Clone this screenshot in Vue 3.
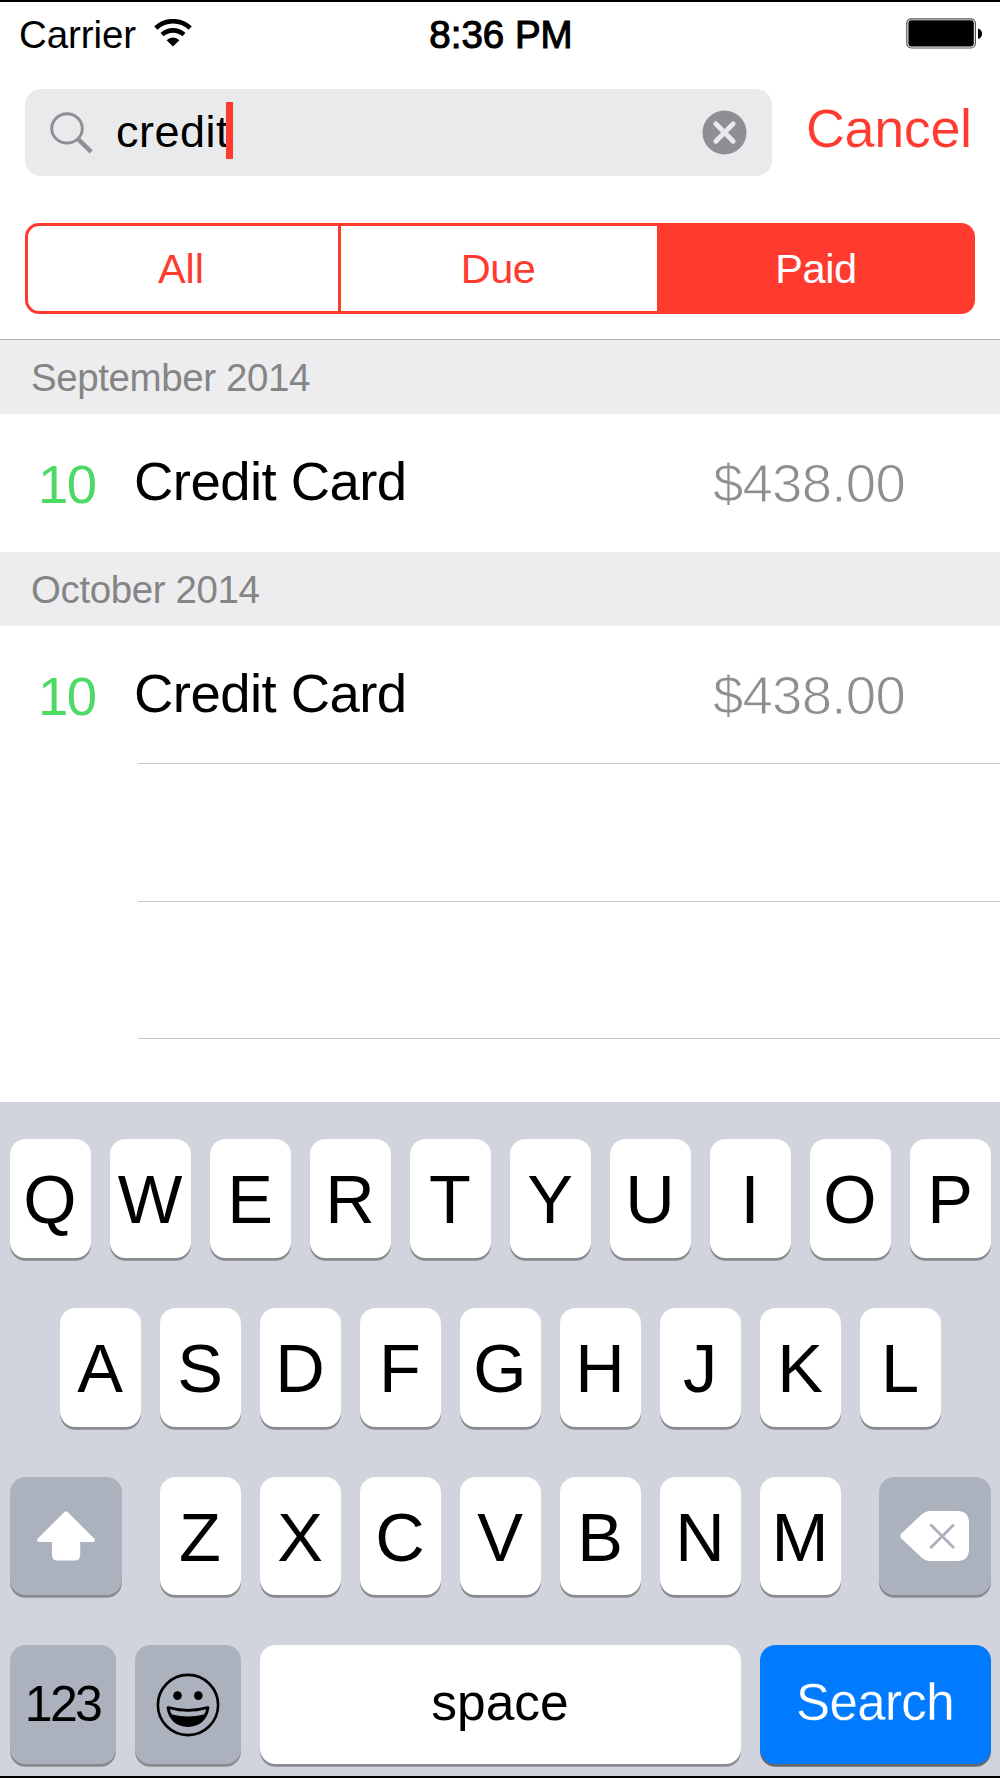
<template>
  <div class="screen">
    <header class="nav">
      <div class="status-bar">
        <div class="status-left">
          <span class="carrier">Carrier</span>
          <svg class="wifi" viewBox="0 0 38 28" aria-hidden="true">
            <path d="M1.8 9 A25.1 25.1 0 0 1 36.2 9" />
            <path d="M8.1 15.6 A16.1 16.1 0 0 1 29.9 15.6" />
            <path class="wifi-dot" d="M19 27.6 L12.6 21.2 A9.2 9.2 0 0 1 25.4 21.2 Z" />
          </svg>
        </div>
        <span class="clock">8:36 PM</span>
        <div class="status-right">
          <svg class="battery" viewBox="0 0 77 31" aria-hidden="true">
            <rect class="battery-shell" x="0.8" y="0.8" width="68.6" height="29.2" rx="4.5" />
            <rect x="2.4" y="2.2" width="65.4" height="26.4" rx="3" />
            <path d="M72 10.4 C77.4 11.4 77.4 20 72 21 Z" />
          </svg>
        </div>
      </div>

      <div class="search-row">
        <div class="search-field">
          <svg class="glass" viewBox="0 0 44 42" aria-hidden="true">
            <ellipse cx="17" cy="16.4" rx="15.3" ry="14.6" />
            <path class="glass-handle" d="M27.4 26.4 L41.2 39.8" />
          </svg>
          <span class="query">{{ query }}</span>
          <span class="caret"></span>
          <svg class="clear" viewBox="0 0 45 45" role="button" aria-label="Clear text">
            <circle cx="22.5" cy="22.5" r="22" />
            <path d="M13.8 13.8 L31.2 31.2 M31.2 13.8 L13.8 31.2" />
          </svg>
        </div>
        <button class="cancel" type="button">Cancel</button>
      </div>

      <div class="segments" role="tablist">
        <button
          v-for="name in FILTERS"
          :key="name"
          type="button"
          role="tab"
          class="segment"
          :class="['segment--' + name.toLowerCase(), { 'segment--on': name === filter }]"
          :aria-selected="name === filter"
          @click="filter = name"
        >
          {{ name }}
        </button>
      </div>
    </header>

    <main class="bills">
      <section v-for="group in GROUPS" :key="group.month">
        <h2 class="month">{{ group.month }}</h2>
        <div v-for="bill in group.bills" :key="bill.name" class="bill">
          <span class="day">{{ bill.day }}</span>
          <span class="name">{{ bill.name }}</span>
          <span class="amount">{{ bill.amount }}</span>
        </div>
      </section>
      <div class="blank"></div>
      <div class="blank"></div>
      <div class="blank"></div>
    </main>

    <footer class="keyboard">
      <div class="keys">
        <button v-for="k in ROW_1" :key="k" type="button" class="key">{{ k }}</button>
      </div>
      <div class="keys">
        <button v-for="k in ROW_2" :key="k" type="button" class="key">{{ k }}</button>
      </div>
      <div class="keys keys--spread">
        <button type="button" class="key key--dark key--shift" aria-label="Shift">
          <svg class="shift-icon" viewBox="0 0 58 50" aria-hidden="true">
            <path d="M27.4 1 Q29 -0.4 30.6 1 L57.2 27.6 Q59 30.8 55.8 31 L43.2 31 L43.2 44 Q43.2 49.6 37.6 49.6 L20.6 49.6 Q15 49.6 15 44 L15 31 L2.2 31 Q-1 30.8 0.8 27.6 Z" />
          </svg>
        </button>
        <div class="letters">
          <button v-for="k in ROW_3" :key="k" type="button" class="key">{{ k }}</button>
        </div>
        <button type="button" class="key key--dark key--shift" aria-label="Delete">
          <svg class="delete-icon" viewBox="0 0 70 50" aria-hidden="true">
            <path d="M1.4 22.6 L20.4 4.6 Q25.4 0 30 0 L57 0 Q69 0 69 12 L69 38 Q69 50 57 50 L30 50 Q25.4 50 20.4 45.4 L1.4 27.4 Q-0.8 25 1.4 22.6 Z" />
            <path class="delete-x" d="M30.4 13.4 L54 37 M54 13.4 L30.4 37" />
          </svg>
        </button>
      </div>
      <div class="keys">
        <button type="button" class="key key--dark key--mode">123</button>
        <button type="button" class="key key--dark key--mode" aria-label="Emoji">
          <svg class="emoji-icon" viewBox="0 0 64 64" aria-hidden="true">
            <circle class="emoji-face" cx="32" cy="32" r="30.1" />
            <circle cx="21.5" cy="22.6" r="4.3" />
            <circle cx="42.3" cy="22.6" r="4.3" />
            <path d="M10.6 34.6 Q10.8 32.8 13 33.3 Q32 38.8 51 33.3 Q53.2 32.8 53.4 34.6 C52 46.5 43.5 54 32 54 C20.5 54 12 46.5 10.6 34.6 Z" />
            <path class="emoji-teeth" d="M14 36.2 Q32 41.2 50 36.2 Q50 39.2 48 41.4 Q32 45.6 16 41.4 Q14 39.2 14 36.2 Z" />
          </svg>
        </button>
        <button type="button" class="key key--space">space</button>
        <button type="button" class="key key--search">Search</button>
      </div>
    </footer>
  </div>
</template>

<script setup>
import { ref } from 'vue';

const FILTERS = ['All', 'Due', 'Paid'];

const GROUPS = [
  { month: 'September 2014', bills: [{ day: 10, name: 'Credit Card', amount: '$438.00' }] },
  { month: 'October 2014', bills: [{ day: 10, name: 'Credit Card', amount: '$438.00' }] },
];

const ROW_1 = [...'QWERTYUIOP'];
const ROW_2 = [...'ASDFGHJKL'];
const ROW_3 = [...'ZXCVBNM'];

const query  = ref('credit');
const filter = ref('Paid');
</script>

<style>
body { margin: 0; background: #fff; }
</style>

<style scoped>
*, *::before, *::after { box-sizing: border-box; margin: 0; padding: 0; }
button { border: none; background: none; font: inherit; color: inherit; white-space: nowrap; cursor: pointer; }
svg { display: block; flex: none; }

.screen { display: flex; flex-direction: column; width: 1000px; height: 1778px; border-top: 2px solid #000; border-bottom: 2px solid #000; background: #fff; color: #000; font-family: "Liberation Sans", Arial, Helvetica, sans-serif; overflow: hidden; }

/* Status bar and search */
.nav { height: 338px; border-bottom: 1px solid #b2b2b2; }
.status-bar { display: grid; grid-template-columns: 1fr auto 1fr; height: 87px; padding: 0 17px 0 19px; font-size: 38.5px; line-height: 65px; }
.status-left { display: flex; gap: 18px; }
.carrier { letter-spacing: -0.1px; }
.wifi { width: 38px; height: 28px; margin-top: 16.5px; fill: none; stroke: #000; stroke-width: 4.6; }
.wifi-dot { fill: #000; stroke: none; }
.clock { -webkit-text-stroke: 1.1px #000; }
.status-right { display: flex; justify-content: flex-end; }
.battery { width: 77px; height: 31px; margin-top: 16px; }
.battery-shell { fill: none; stroke: #555; stroke-width: 1.2; }

.search-row { display: flex; height: 87px; padding: 0 25px; }
.search-field { display: flex; width: 747px; height: 87px; padding: 0 25px; border-radius: 16px; background: #e9eaec; }
.glass { width: 44px; height: 42px; margin-top: 23px; fill: none; stroke: #8e8e93; stroke-width: 2.9; }
.glass-handle { stroke-width: 4.4; }
.query { margin-left: 22px; font-size: 45px; line-height: 86px; letter-spacing: 0.5px; }
.caret { width: 7px; height: 57px; margin: 13px auto 0 -2.6px; background: #ff3b30; }
.clear { width: 45px; height: 45px; margin-top: 21px; fill: #8e8e93; }
.clear path { stroke: #e9eaec; stroke-width: 4.8; stroke-linecap: round; }
.cancel { height: 79px; margin-left: 34px; color: #ff3b30; font-size: 54px; line-height: 79px; letter-spacing: -0.4px; -webkit-text-stroke: 0.2px #fff; }

.segments { display: flex; width: 950px; height: 91px; margin: 47px 25px 0; }
.segment { width: 316px; border: 3px solid #ff3b30; border-left: none; color: #ff3b30; font-size: 41.5px; line-height: 82px; }
.segment--all { padding-right: 4px; border-left: 3px solid #ff3b30; border-radius: 14px 0 0 14px; }
.segment--due { padding-right: 2px; border-right: none; letter-spacing: -0.5px; }
.segment--paid { width: 318px; border-radius: 0 14px 14px 0; letter-spacing: -0.4px; }
.segment--on { border: none; background: #ff3b30; color: #fff; line-height: 88px; }

/* Bill list */
.bills { height: 762px; }
.month { height: 74px; padding-left: 31px; background: #ededef; color: #858585; font-size: 38.5px; font-weight: 400; line-height: 75px; letter-spacing: -0.4px; }
.bill { display: grid; grid-template-columns: 96px 1fr auto; height: 138px; padding: 0 95px 0 38px; font-size: 54.5px; line-height: 136px; }
.day { color: #4cd964; line-height: 141px; letter-spacing: -1.5px; }
.name { letter-spacing: -0.55px; }
.amount { color: #8e8e8e; line-height: 139px; letter-spacing: -0.7px; -webkit-text-stroke: 1px #fff; }
.blank { height: 137.5px; margin-left: 138px; border-top: 1px solid #c8c7cc; }
section:nth-of-type(2) .bill { height: 137px; }

/* Keyboard */
.keyboard { display: flex; flex: 1; flex-direction: column; gap: 50px; padding: 37px 9.5px 0; background: #d1d4dc; }
.keys { display: flex; justify-content: center; gap: 19px; height: 118.75px; }
.keys--spread { justify-content: space-between; }
.letters { display: flex; gap: 19px; }
.key { display: flex; flex: none; align-items: flex-start; justify-content: center; width: 81px; height: 118.75px; border-radius: 15.6px; background: #fff; box-shadow: 0 2.8px 0 #888a8e; font-size: 68.5px; line-height: 122px; }
.key--dark { align-items: center; background: #abb1bd; }
.key--shift { width: 112px; }
.key--mode { width: 106px; font-size: 50px; line-height: 125px; letter-spacing: -2.6px; }
.key--space { width: 481px; font-size: 51.5px; line-height: 115px; }
.key--search { width: 231px; background: #007aff; box-shadow: 0 2.8px 0 #65686d; color: #fff; font-size: 51px; line-height: 115px; letter-spacing: -0.6px; -webkit-text-stroke: 0.3px #007aff; }
.shift-icon { width: 58px; height: 50px; margin-left: 1px; fill: #fff; }
.delete-icon { width: 70px; height: 50px; margin-left: 1px; fill: #fff; }
.delete-x { stroke: #abb1bd; stroke-width: 2.8; }
.emoji-icon { width: 64px; height: 64px; }
.emoji-face { fill: none; stroke: #000; stroke-width: 2.6; }
.emoji-teeth { fill: #abb1bd; }
</style>
